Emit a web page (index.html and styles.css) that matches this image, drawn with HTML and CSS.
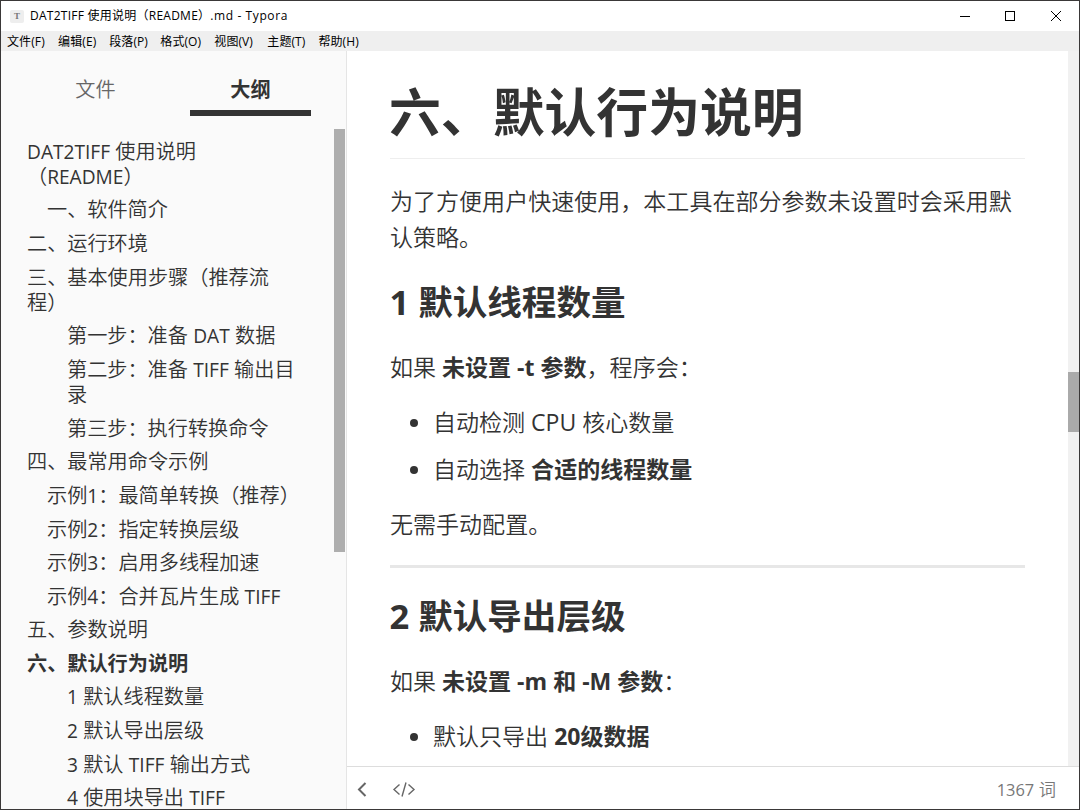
FILE: index.html
```html
<!DOCTYPE html>
<html lang="zh-CN">
<head>
<meta charset="utf-8">
<title>DAT2TIFF 使用说明（README）.md - Typora</title>
<link rel="stylesheet" href="styles.css">
</head>
<body>
<div class="window">
  <header class="titlebar">
    <span class="app-icon">T</span>
    <span class="title">DAT2TIFF 使用说明（README）<span class="title-ext">.md - Typora</span></span>
    <svg class="controls" width="120" height="29" viewBox="0 0 120 29" fill="none" stroke="#000" stroke-width="1">
      <path d="M9 14.5h10M54.500 9.500h9v9h-9z" shape-rendering="crispEdges"/>
      <path d="M100 9l10 10M110 9l-10 10"/>
    </svg>
  </header>
  <nav class="menubar">
    <span>文件(F)</span><span>编辑(E)</span><span>段落(P)</span><span>格式(O)</span><span>视图(V)</span><span>主题(T)</span><span>帮助(H)</span>
  </nav>
  <div class="workspace">
    <aside class="sidebar">
      <div class="tabs"><div class="tab">文件</div><div class="tab active">大纲</div></div>
      <div class="outline-wrap">
        <ul class="outline">
          <li><span class="en">DAT2TIFF</span> 使用说明<br>（<span class="en">README</span>）</li>
          <li class="l2">一、软件简介</li>
          <li>二、运行环境</li>
          <li>三、基本使用步骤（推荐流<br>程）</li>
          <li class="l3">第一步：准备 <span class="en">DAT</span> 数据</li>
          <li class="l3">第二步：准备 <span class="en">TIFF</span> 输出目<br>录</li>
          <li class="l3">第三步：执行转换命令</li>
          <li>四、最常用命令示例</li>
          <li class="l2">示例<span class="en">1</span>：最简单转换（推荐）</li>
          <li class="l2">示例<span class="en">2</span>：指定转换层级</li>
          <li class="l2">示例<span class="en">3</span>：启用多线程加速</li>
          <li class="l2">示例<span class="en">4</span>：合并瓦片生成 <span class="en">TIFF</span></li>
          <li>五、参数说明</li>
          <li class="current">六、默认行为说明</li>
          <li class="l3"><span class="en">1</span> 默认线程数量</li>
          <li class="l3"><span class="en">2</span> 默认导出层级</li>
          <li class="l3"><span class="en">3</span> 默认 <span class="en">TIFF</span> 输出方式</li>
          <li class="l3"><span class="en">4</span> 使用块导出 <span class="en">TIFF</span></li>
        </ul>
        <div class="side-thumb"></div>
      </div>
    </aside>
    <main class="main">
      <div class="editor">
        <article class="doc">
          <h1>六、默认行为说明</h1>
          <p>为了方便用户快速使用，本工具在部分参数未设置时会采用默<br>认策略。</p>
          <h3>1 默认线程数量</h3>
          <p>如果 <strong>未设置 -t 参数</strong>，程序会：</p>
          <ul>
            <li>自动检测 <span class="latin">CPU</span> 核心数量</li>
            <li>自动选择 <strong>合适的线程数量</strong></li>
          </ul>
          <p>无需手动配置。</p>
          <hr>
          <h3>2 默认导出层级</h3>
          <p>如果 <strong>未设置 -m 和 -M 参数</strong>：</p>
          <ul>
            <li>默认只导出 <strong>20级数据</strong></li>
          </ul>
        </article>
        <div class="scrollbar"><div class="thumb"></div></div>
      </div>
      <footer class="statusbar">
        <svg width="76" height="42" viewBox="0 0 76 42" fill="none" stroke="#666">
          <path d="M18.500 16l-6.500 6.500 6.500 6.500" stroke-width="2"/>
          <path d="M52.500 17.500l-5.500 5 5.500 5M61.500 17.500l5.500 5-5.500 5M59 15.500l-4 14" stroke-width="1.400"/>
        </svg>
        <span class="count"><span class="en">1367</span> 词</span>
      </footer>
    </main>
  </div>
</div>
</body>
</html>
```
FILE: styles.css
```css
* { box-sizing: border-box; }
body { margin: 0; text-spacing-trim: space-all; }
.window {
  width: 1080px; height: 810px; overflow: hidden;
  display: flex; flex-direction: column;
  border: 1px solid #3a3838; background: #fff; color: #333;
  font-family: "Open Sans", "Noto Sans CJK SC", sans-serif;
}
.titlebar { height: 30px; flex: none; display: flex; align-items: center; padding-left: 9px; color: #000; font-size: 12px; white-space: nowrap; }
.app-icon { width: 14px; height: 13px; margin-right: 6px; border-radius: 2px; background: #eee; color: #777; font: bold 9px/13px "Liberation Serif", serif; text-align: center; }
.title { line-height: 18px; letter-spacing: .25px; }
.title-ext { letter-spacing: .6px; }
.controls { margin-left: auto; margin-right: 8px; }
.menubar { height: 20px; flex: none; display: flex; gap: 12px; padding-left: 6px; background: #efefef; color: #000; font-size: 12px; line-height: 22px; white-space: nowrap; }
.menubar span { width: 39.1px; letter-spacing: .1px; }
.menubar span:nth-child(4) { width: 42px; }
.menubar span:nth-child(5) { width: 41px; }
.workspace { flex: 1; min-height: 0; display: flex; }
.sidebar { width: 346px; flex: none; background: #fafafa; border-right: 1px solid #e5e5e5; display: flex; flex-direction: column; }
.tabs { display: flex; height: 65px; flex: none; padding-left: 34px; gap: 34px; font-size: 20.16px; line-height: 76px; text-align: center; }
.tab { width: 121px; color: #666; font-weight: 350; }
.active { border-bottom: 6px solid #333; color: #333; font-weight: 700; }
.outline-wrap { flex: 1; min-height: 0; display: flex; justify-content: space-between; padding: 13px 1px 0 0; }
.outline { list-style: none; margin: 0; padding: 5.5px 0 0 26px; font-size: 20.16px; line-height: 25.2px; font-weight: 350; white-space: nowrap; }
.outline li { padding: 4.2px 0; }
.outline .l2 { padding-left: 20px; }
.outline .l3 { padding-left: 40px; }
.outline .current { font-weight: 700; }
.en { font-size: .95em; font-weight: 400; line-height: 1; }
.latin { font-weight: 400; }
.side-thumb { width: 11px; height: 423px; background: #aeaeae; flex: none; }
.main { flex: 1; min-width: 0; display: flex; flex-direction: column; }
.editor { flex: 1; min-height: 0; display: flex; justify-content: space-between; overflow: hidden; }
.doc { width: 635px; margin-left: 43px; padding-top: 29px; font-size: 23.04px; line-height: 36px; font-weight: 350; white-space: nowrap; }
.doc h1 { margin: 0 0 24px; height: 79px; border-bottom: 1px solid #eee; font-size: 51.84px; line-height: 64px; text-indent: -1px; }
.doc p { margin: 0; }
.doc h3 { margin: 22px 0 22px; font-size: 34.56px; line-height: 50px; text-indent: -.5px; }
.doc strong { font-weight: 700; }
.doc ul { margin: 19px 0; padding-left: 43px; }
.doc li + li { margin-top: 11px; }
.doc hr { margin: 23px 0; border: 0; height: 3px; background: #e7e7e7; }
.scrollbar { width: 11px; flex: none; padding-top: 321px; background: #f1f1f1; }
.thumb { height: 60px; background: #aaa; }
.statusbar { height: 43px; flex: none; border-top: 1px solid #ddd; display: flex; justify-content: space-between; padding: 0 23px 0 0; color: #777; font-size: 17.28px; line-height: 46px; font-weight: 350; }
```
